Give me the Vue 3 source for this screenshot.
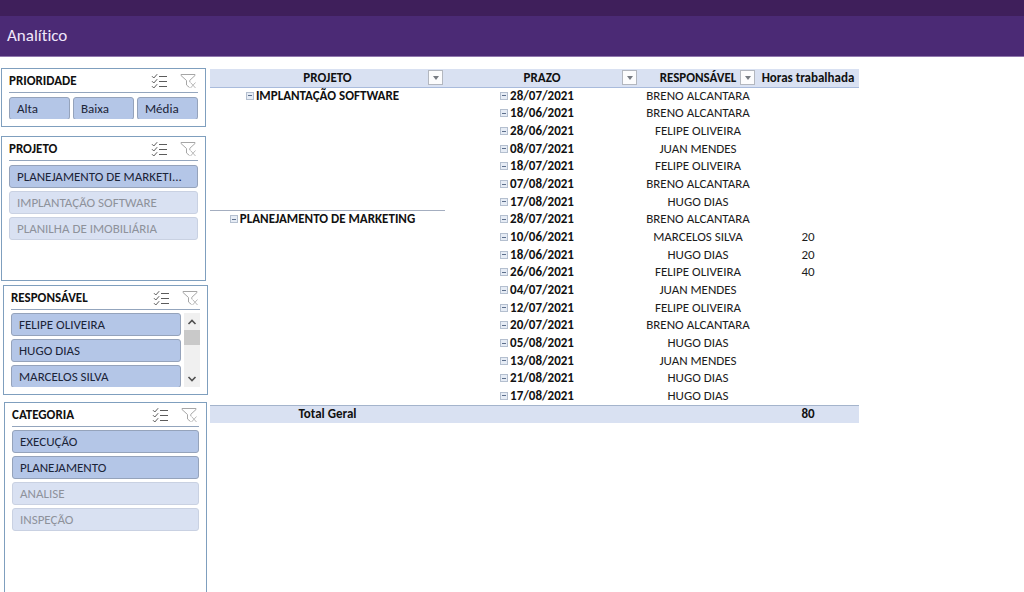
<script setup>
const slicers = [
  { id: 'prioridade', title: 'PRIORIDADE', items: [['Alta', true], ['Baixa', true], ['Média', true]] },
  {
    id: 'projeto',
    title: 'PROJETO',
    items: [['PLANEJAMENTO DE MARKETI...', true], ['IMPLANTAÇÃO SOFTWARE', false], ['PLANILHA DE IMOBILIÁRIA', false]],
  },
  {
    id: 'responsavel',
    title: 'RESPONSÁVEL',
    scroll: true,
    items: [['FELIPE OLIVEIRA', true], ['HUGO DIAS', true], ['MARCELOS SILVA', true]],
  },
  {
    id: 'categoria',
    title: 'CATEGORIA',
    items: [['EXECUÇÃO', true], ['PLANEJAMENTO', true], ['ANALISE', false], ['INSPEÇÃO', false]],
  },
]

const columns = [
  { key: 'projeto', label: 'PROJETO', filter: true },
  { key: 'prazo', label: 'PRAZO', filter: true },
  { key: 'responsavel', label: 'RESPONSÁVEL', filter: true },
  { key: 'horas', label: 'Horas trabalhada', filter: false },
]

const rows = [
  ['IMPLANTAÇÃO SOFTWARE', '28/07/2021', 'BRENO ALCANTARA', ''],
  ['', '18/06/2021', 'BRENO ALCANTARA', ''],
  ['', '28/06/2021', 'FELIPE OLIVEIRA', ''],
  ['', '08/07/2021', 'JUAN MENDES', ''],
  ['', '18/07/2021', 'FELIPE OLIVEIRA', ''],
  ['', '07/08/2021', 'BRENO ALCANTARA', ''],
  ['', '17/08/2021', 'HUGO DIAS', ''],
  ['PLANEJAMENTO DE MARKETING', '28/07/2021', 'BRENO ALCANTARA', ''],
  ['', '10/06/2021', 'MARCELOS SILVA', '20'],
  ['', '18/06/2021', 'HUGO DIAS', '20'],
  ['', '26/06/2021', 'FELIPE OLIVEIRA', '40'],
  ['', '04/07/2021', 'JUAN MENDES', ''],
  ['', '12/07/2021', 'FELIPE OLIVEIRA', ''],
  ['', '20/07/2021', 'BRENO ALCANTARA', ''],
  ['', '05/08/2021', 'HUGO DIAS', ''],
  ['', '13/08/2021', 'JUAN MENDES', ''],
  ['', '21/08/2021', 'HUGO DIAS', ''],
  ['', '17/08/2021', 'HUGO DIAS', ''],
]
</script>

<template>
  <div class="page">
    <header class="banner">
      <h1>Analítico</h1>
    </header>
    <main class="sheet">
      <aside class="slicers">
        <section v-for="s in slicers" :key="s.id" class="slicer" :class="s.id" :aria-label="s.title">
          <div class="slicer-head">
            <h2>{{ s.title }}</h2>
            <button class="tool" type="button" aria-label="Seleção múltipla">
              <svg width="17" height="16" viewBox="0 0 17 16" fill="none" stroke="#5c5c5c">
                <path d="M1 3.2 2.8 5 6.2 1.2M1 8.2 2.8 10 6.2 6.2M1 13.2 2.8 15 6.2 11.2" />
                <path d="M8 3.5h8M8 8.5h8M8 13.5h8" />
              </svg>
            </button>
            <button class="tool" type="button" aria-label="Limpar filtro">
              <svg width="17" height="16" viewBox="0 0 17 16" fill="none" stroke="#a6a6a6">
                <path d="M9.5 14.5 6.5 12V7.5L1 2.5v-1h14v1L9.8 7.3v1.9" />
                <path d="m10.5 9.5 5 5.5M15.5 9.5l-5 5.5" stroke="#b8b8b8" />
              </svg>
            </button>
          </div>
          <div class="slicer-body">
            <div class="items">
              <button
                v-for="[name, on] in s.items"
                :key="name"
                class="item"
                :class="{ off: !on }"
                type="button"
                :aria-pressed="on"
              >{{ name }}</button>
            </div>
            <div v-if="s.scroll" class="scrollbar">
              <button type="button" aria-label="Rolar para cima">
                <svg width="10" height="6" viewBox="0 0 10 6" fill="none" stroke="#505050" stroke-width="1.6"><path d="M1.5 5 5 1.5 8.5 5" /></svg>
              </button>
              <div class="thumb"></div>
              <button type="button" aria-label="Rolar para baixo">
                <svg width="10" height="6" viewBox="0 0 10 6" fill="none" stroke="#505050" stroke-width="1.6"><path d="M1.5 1 5 4.5 8.5 1" /></svg>
              </button>
            </div>
          </div>
        </section>
      </aside>

      <div class="report">
        <table>
          <colgroup>
            <col v-for="c in columns" :key="c.key" :class="'col-' + c.key" />
          </colgroup>
          <thead>
            <tr>
              <th v-for="c in columns" :key="c.key" scope="col">
                {{ c.label }}
                <button v-if="c.filter" class="filter" type="button" :aria-label="'Filtrar ' + c.label">
                  <svg width="6" height="4" viewBox="0 0 6 4"><path d="M0 0h6L3 4z" fill="#777b82" /></svg>
                </button>
              </th>
            </tr>
          </thead>
          <tbody>
            <tr v-for="(r, i) in rows" :key="i" :class="{ group: r[0] && i > 0 }">
              <td class="strong">
                <template v-if="r[0]"><button class="toggle" type="button" :aria-label="'Recolher ' + r[0]"></button>{{ r[0] }}</template>
              </td>
              <td class="strong"><button class="toggle" type="button" :aria-label="'Recolher ' + r[1]"></button>{{ r[1] }}</td>
              <td>{{ r[2] }}</td>
              <td>{{ r[3] }}</td>
            </tr>
          </tbody>
          <tfoot>
            <tr>
              <th scope="row">Total Geral</th>
              <td></td>
              <td></td>
              <td class="strong">80</td>
            </tr>
          </tfoot>
        </table>
      </div>
    </main>
  </div>
</template>

<style>
body {
  margin: 0;
  background: #fff;
}
</style>

<style scoped>
.page {
  display: flex;
  flex-direction: column;
  min-height: 100vh;
  font: 13px/16px Calibri, Carlito, Lato, "Liberation Sans", sans-serif;
  font-variant-ligatures: none;
  color: #1c1c1c;
}
.page * {
  box-sizing: border-box;
}
button {
  margin: 0;
  padding: 0;
  border: 0;
  background: none;
  font: inherit;
  color: inherit;
}
.banner {
  padding: 10px 7px;
  border-top: 16px solid #3f1f5b;
  border-bottom: 1px solid #9078ad;
  background: #4b2a75;
}
.banner h1 {
  margin: 0;
  font-size: 17px;
  line-height: 20px;
  font-weight: 400;
  color: #f0e6fa;
}
.sheet {
  flex: 1;
  display: flex;
  align-items: stretch;
  padding-top: 11px;
}
.slicers {
  flex: none;
  display: flex;
  flex-direction: column;
  width: 210px;
}
.slicer {
  display: flex;
  flex-direction: column;
  width: 205px;
  margin-left: 1px;
  padding: 0 7px 7px;
  border: 1px solid #7f9fbe;
  background: #fff;
}
.prioridade {
  height: 59px;
}
.projeto {
  height: 145px;
  margin-top: 9px;
}
.responsavel {
  height: 110px;
  margin: 4px 0 0 3px;
}
.categoria {
  flex: 1;
  margin: 7px 0 0 4px;
  width: 203px;
  border-bottom: 0;
}
.slicer-head {
  flex: none;
  display: flex;
  align-items: center;
  gap: 12px;
  height: 24px;
  padding-right: 1px;
  border-bottom: 1px solid #93a5bd;
}
.slicer-head h2 {
  flex: 1;
  margin: 0;
  font-size: 13px;
  line-height: 16px;
  font-weight: 700;
  color: #111;
}
.tool,
.tool svg {
  display: block;
}
.slicer-body {
  flex: 1;
  min-height: 0;
  display: flex;
  gap: 3px;
  margin-top: 3px;
  overflow: hidden;
}
.prioridade .slicer-body,
.projeto .slicer-body {
  margin-top: 4px;
}
.items {
  flex: 1;
  min-width: 0;
  display: flex;
  flex-direction: column;
  gap: 3px;
}
.prioridade .items {
  flex-direction: row;
}
.item {
  flex: none;
  height: 23px;
  padding: 0 7px;
  border: 1px solid #95a3bb;
  border-radius: 3px;
  background: #b4c6e7;
  color: #1b2438;
  text-align: left;
  white-space: nowrap;
}
.prioridade .item {
  flex: 1;
}
.item.off {
  border-color: #c9d1e2;
  background: #d9e1f2;
  color: #8e929b;
}
.scrollbar {
  display: flex;
  flex-direction: column;
  width: 16px;
  background: #f0f0f0;
}
.scrollbar button {
  display: grid;
  place-items: center;
  height: 17px;
}
.thumb {
  height: 15px;
  margin-bottom: auto;
  background: #c9c9c9;
}
.report {
  flex: 1;
  min-width: 0;
}
table {
  table-layout: fixed;
  width: 100%;
  max-width: 649px;
  margin-top: 1px;
  border-collapse: collapse;
  text-align: center;
}
.col-projeto {
  width: 235px;
}
.col-prazo {
  width: 194px;
}
.col-responsavel {
  width: 118px;
}
.col-horas {
  width: 102px;
}
th,
td {
  height: 18px;
  padding: 0;
  line-height: 16px;
  white-space: nowrap;
}
tbody tr:nth-child(3n + 1) td {
  height: 17px;
}
th,
.strong {
  font-weight: 700;
  color: #111;
}
thead th {
  position: relative;
  background: #d9e1f2;
  border-bottom: 1px solid #a9bbdc;
}
.filter {
  position: absolute;
  top: 1px;
  right: 2px;
  display: grid;
  place-items: center;
  width: 15px;
  height: 15px;
  border: 1px solid #b3b7bf;
  background: #fcfcfd;
}
.toggle {
  display: inline-block;
  width: 8px;
  height: 8px;
  margin: 0 2px 0 -10px;
  border: 1px solid #b4bfcf;
  background: linear-gradient(#5d6f8c, #5d6f8c) center / 4px 1px no-repeat #e6ecf5;
  vertical-align: 1px;
}
.group td:first-child {
  border-top: 1px solid #a4aec0;
}
tfoot th,
tfoot td {
  background: #d9e1f2;
  border-top: 1px solid #a4b4cc;
}
</style>
